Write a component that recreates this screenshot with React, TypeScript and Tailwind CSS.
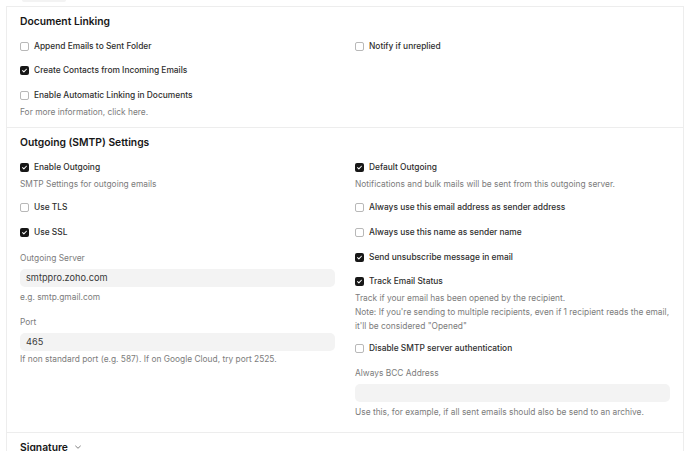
import { ReactNode } from 'react';

const font = { fontFamily: 'Inter, "Noto Sans", sans-serif' };

// Small checkbox with label, frappe-ui look
const Check = ({ label, checked = false, className = '' }: { label: string; checked?: boolean; className?: string }) => (
  <div className={`flex items-center h-[12px] ${className}`}>
    {checked ? (
      <span className="flex items-center justify-center w-[9px] h-[9px] rounded-[2px] bg-[#171717]">
        <svg viewBox="0 0 10 10" className="w-[7px] h-[7px]" fill="none">
          <path d="M2.3 5.2 4.1 7 7.7 3.2" stroke="#fff" strokeWidth="1.5" strokeLinecap="round" strokeLinejoin="round" />
        </svg>
      </span>
    ) : (
      <span className="w-[9px] h-[9px] rounded-[2px] border border-[#b8b8b8] bg-white" />
    )}
    <span className="ml-[5px] text-[8.4px] font-medium text-[#2e2e2e] leading-[12px]">{label}</span>
  </div>
);

const Desc = ({ children, className = '' }: { children: ReactNode; className?: string }) => (
  <p className={`text-[8.4px] leading-[12px] text-[#7c7c7c] ${className}`}>{children}</p>
);

const Label = ({ children, className = '' }: { children: ReactNode; className?: string }) => (
  <p className={`text-[8.4px] leading-[12px] text-[#7c7c7c] ${className}`}>{children}</p>
);

const Input = ({ value = '', className = '' }: { value?: string; className?: string }) => (
  <div className={`h-[18px] rounded-[5px] bg-[#f3f3f3] pl-[6px] pr-[5px] flex items-center text-[9.2px] text-[#383838] ${className}`}>
    {value}
  </div>
);

const Heading = ({ children }: { children: ReactNode }) => (
  <h3 className="text-[10.3px] leading-[14px] font-semibold text-[#171717]">{children}</h3>
);

export default function App() {
  return (
    <div className="w-[690px] h-[451px] overflow-hidden bg-white" style={font}>
      {/* tab strip above the panel */}
      <div className="h-[6px]">
        <div className="ml-[22px] w-[44px] h-[2px] bg-[#f3f3f3] rounded-b-[3px]" />
      </div>

      <div className="ml-[6px] w-[678px] border-x border-t border-[#ededed]">
        {/* Document Linking */}
        <section className="px-[13px] pt-[7px] pb-[9px] border-b border-[#ededed]">
          <Heading>Document Linking</Heading>
          <div className="grid grid-cols-2 gap-x-[20px] mt-[12px]">
            <div>
              <Check label="Append Emails to Sent Folder" />
              <Check label="Create Contacts from Incoming Emails" checked className="mt-[12px]" />
              <Check label="Enable Automatic Linking in Documents" className="mt-[13px]" />
              <Desc className="mt-[5px]">For more information, click here.</Desc>
            </div>
            <div>
              <Check label="Notify if unreplied" />
            </div>
          </div>
        </section>

        {/* Outgoing (SMTP) Settings */}
        <section className="px-[13px] pt-[7px] pb-[14px] border-b border-[#ededed]">
          <Heading>Outgoing (SMTP) Settings</Heading>
          <div className="grid grid-cols-2 gap-x-[20px] mt-[12px]">
            <div>
              <Check label="Enable Outgoing" checked />
              <Desc className="mt-[5px]">SMTP Settings for outgoing emails</Desc>
              <Check label="Use TLS" className="mt-[11px]" />
              <Check label="Use SSL" checked className="mt-[13px]" />
              <Label className="mt-[14px]">Outgoing Server</Label>
              <Input value="smtppro.zoho.com" className="mt-[5px]" />
              <Desc className="mt-[4px]">e.g. smtp.gmail.com</Desc>
              <Label className="mt-[13px]">Port</Label>
              <Input value="465" className="mt-[5px]" />
              <Desc className="mt-[2px]">If non standard port (e.g. 587). If on Google Cloud, try port 2525.</Desc>
            </div>
            <div>
              <Check label="Default Outgoing" checked />
              <Desc className="mt-[5px]">Notifications and bulk mails will be sent from this outgoing server.</Desc>
              <Check label="Always use this email address as sender address" className="mt-[11px]" />
              <Check label="Always use this name as sender name" className="mt-[13px]" />
              <Check label="Send unsubscribe message in email" checked className="mt-[13px]" />
              <Check label="Track Email Status" checked className="mt-[12px]" />
              <Desc className="mt-[4px] leading-[14px]">
                Track if your email has been opened by the recipient.
                <br />
                Note: If you're sending to multiple recipients, even if 1 recipient reads the email, it'll be considered "Opened"
              </Desc>
              <Check label="Disable SMTP server authentication" className="mt-[9px]" />
              <Label className="mt-[13px]">Always BCC Address</Label>
              <Input className="mt-[5px]" />
              <Desc className="mt-[4px]">Use this, for example, if all sent emails should also be send to an archive.</Desc>
            </div>
          </div>
        </section>

        {/* Signature (collapsed) */}
        <section className="px-[13px] pt-[7px] pb-[10px]">
          <div className="flex items-center">
            <Heading>Signature</Heading>
            <svg viewBox="0 0 10 10" className="ml-[6px] w-[8px] h-[8px]" fill="none">
              <path d="M2 3.8 5 6.6 8 3.8" stroke="#525252" strokeWidth="0.9" strokeLinecap="round" strokeLinejoin="round" />
            </svg>
          </div>
        </section>
      </div>
    </div>
  );
}
